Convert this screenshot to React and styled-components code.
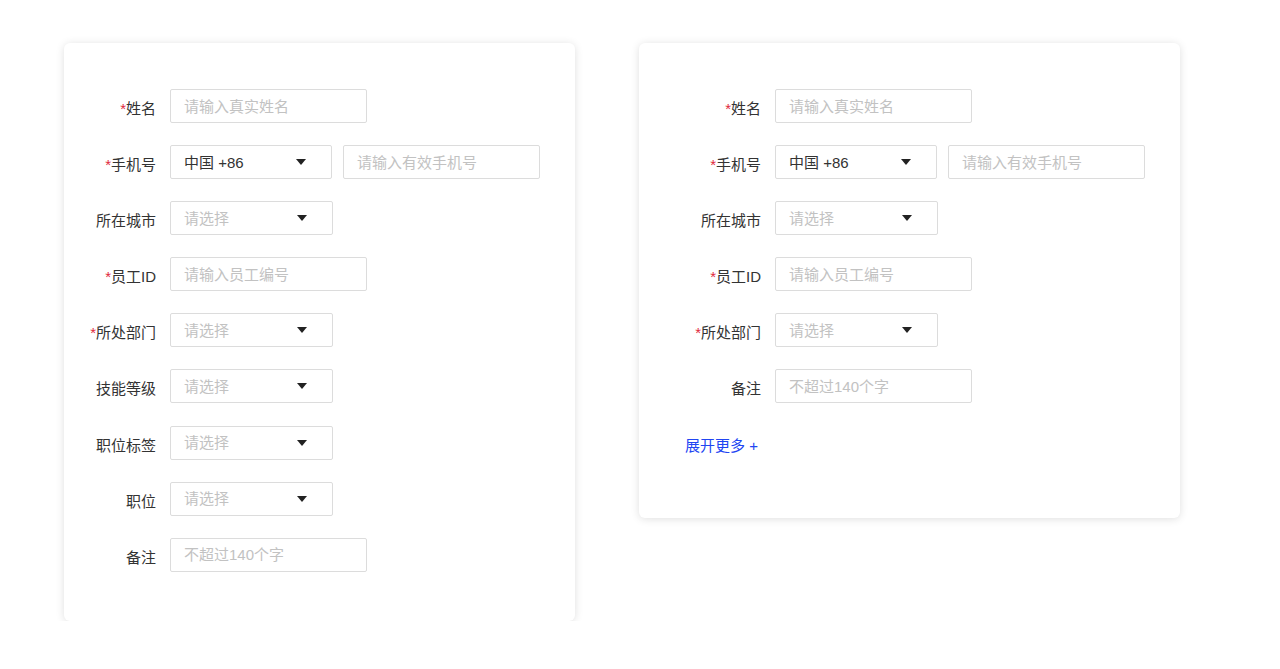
import React from 'react';
import styled, { createGlobalStyle } from 'styled-components';

const Global = createGlobalStyle`
  body {
    margin: 0;
    background: #fff;
    font-family: "Liberation Sans", "Noto Sans CJK SC", sans-serif;
  }
`;

const Page = styled.div`
  display: flex;
  align-items: flex-start;
  gap: 64px;
  padding: 43px 0 0 64px;
`;

const Card = styled.div`
  width: ${p => p.width}px;
  box-sizing: border-box;
  background: #fff;
  border-radius: 6px;
  box-shadow: 0 1px 8px rgba(0, 0, 0, 0.13);
  padding: 46px 0 ${p => p.bottom}px 20px;
`;

const Form = styled.div`
  display: flex;
  flex-direction: column;
  gap: 22.1px;
`;

const Row = styled.div`
  display: flex;
  align-items: center;
  height: 34px;
`;

const Label = styled.div`
  width: ${p => p.width}px;
  margin-right: 14px;
  text-align: right;
  font-size: 15px;
  color: #333;
  padding-top: 3px;
  white-space: nowrap;
  span {
    color: #e0283c;
  }
`;

const Input = styled.div`
  width: ${p => p.width || 197}px;
  height: 34px;
  box-sizing: border-box;
  border: 1px solid #dcdcdc;
  border-radius: 2px;
  padding: 0 13px 2px;
  display: flex;
  align-items: center;
  justify-content: space-between;
  font-size: 15px;
  color: ${p => (p.filled ? '#333' : '#c2c2c2')};
  margin-right: ${p => p.gap || 0}px;
`;

const Arrow = styled.i`
  width: 0;
  height: 0;
  border-left: 5px solid transparent;
  border-right: 5px solid transparent;
  border-top: 6px solid #222;
  margin: 2px 12px 0 0;
`;

const More = styled.div`
  margin-top: 31px;
  padding-left: 26px;
  font-size: 15px;
  color: #2145f2;
`;

const Field = ({ label, req, lw, children }) => (
  <Row>
    <Label width={lw}>
      {req && <span>*</span>}
      {label}
    </Label>
    {children}
  </Row>
);

const Select = ({ text, filled, width = 163, gap }) => (
  <Input width={width} filled={filled} gap={gap}>
    {text}
    <Arrow />
  </Input>
);

export default function App() {
  const lw1 = 72;
  const lw2 = 102;
  return (
    <>
      <Global />
      <Page>
        <Card width={511} bottom={49}>
          <Form>
            <Field label="姓名" req lw={lw1}><Input>请输入真实姓名</Input></Field>
            <Field label="手机号" req lw={lw1}>
              <Select text="中国 +86" filled width={162} gap={11} />
              <Input>请输入有效手机号</Input>
            </Field>
            <Field label="所在城市" lw={lw1}><Select text="请选择" /></Field>
            <Field label="员工ID" req lw={lw1}><Input>请输入员工编号</Input></Field>
            <Field label="所处部门" req lw={lw1}><Select text="请选择" /></Field>
            <Field label="技能等级" lw={lw1}><Select text="请选择" /></Field>
            <Field label="职位标签" lw={lw1}><Select text="请选择" /></Field>
            <Field label="职位" lw={lw1}><Select text="请选择" /></Field>
            <Field label="备注" lw={lw1}><Input>不超过140个字</Input></Field>
          </Form>
        </Card>
        <Card width={541} bottom={63}>
          <Form>
            <Field label="姓名" req lw={lw2}><Input>请输入真实姓名</Input></Field>
            <Field label="手机号" req lw={lw2}>
              <Select text="中国 +86" filled width={162} gap={11} />
              <Input>请输入有效手机号</Input>
            </Field>
            <Field label="所在城市" lw={lw2}><Select text="请选择" /></Field>
            <Field label="员工ID" req lw={lw2}><Input>请输入员工编号</Input></Field>
            <Field label="所处部门" req lw={lw2}><Select text="请选择" /></Field>
            <Field label="备注" lw={lw2}><Input>不超过140个字</Input></Field>
          </Form>
          <More>展开更多 +</More>
        </Card>
      </Page>
    </>
  );
}
